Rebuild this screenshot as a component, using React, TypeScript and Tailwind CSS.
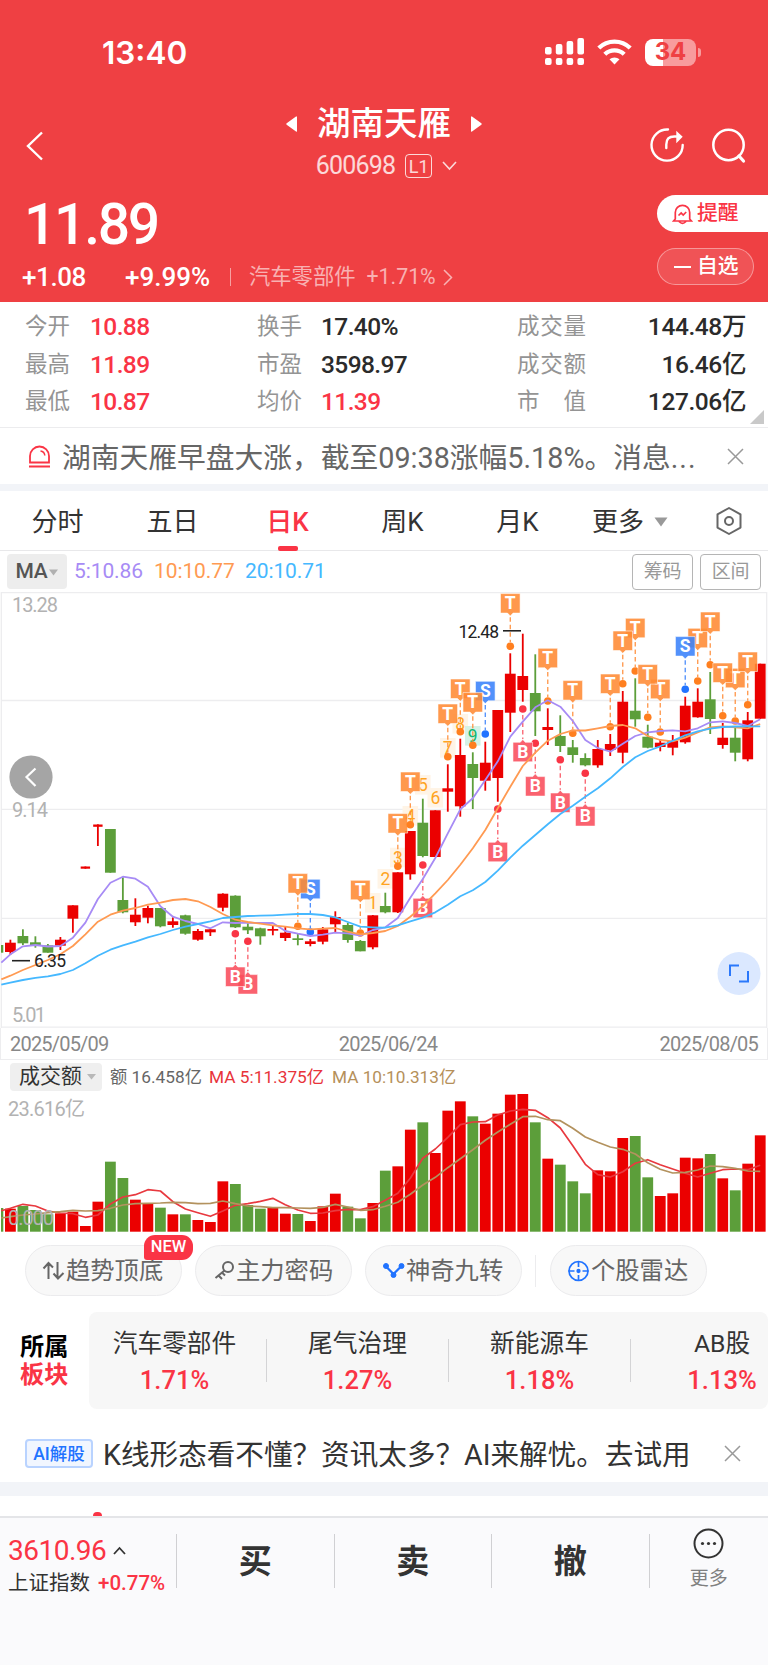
import type { ReactNode } from 'react';

type Candle = [up: boolean, high: number, top: number, bottom: number, low: number];
type MarkKind = 'T' | 'S' | 'B';

const UP = '#eb0000';
const DOWN = '#5c9e3a';

// first candle is cut off by the left edge, so it sits at index -1
const xAt = (i: number) => 10.4 + i * 12.497;

const candles: Candle[] = [
  [false, 945, 945, 952.7, 952.7],
  [true, 939.7, 942.7, 952, 955],
  [false, 929.3, 936, 943.3, 945],
  [false, 936.3, 942.3, 945.7, 947.7],
  [false, 944, 945.3, 952.7, 952.7],
  [true, 937, 939.7, 945.7, 950],
  [true, 905.3, 905.3, 918.7, 932.7],
  [true, 866.5, 866.5, 868.7, 868.7],
  [true, 824.3, 824.5, 826.8, 846],
  [false, 829, 829, 872.7, 872.7],
  [false, 877.3, 900, 912.3, 913.3],
  [true, 898.3, 914.7, 922.3, 926],
  [true, 905.7, 908, 917.7, 923.3],
  [false, 908, 908, 926.3, 927.3],
  [true, 917.3, 921.3, 925, 927.7],
  [false, 914.7, 915.3, 933.7, 934.7],
  [true, 929, 931, 939.7, 940.7],
  [true, 929, 929.3, 932.3, 936],
  [true, 893.3, 893.7, 907.7, 911.3],
  [false, 895.3, 895.7, 927.3, 928],
  [false, 923.3, 926.7, 930.3, 934],
  [false, 927.7, 928.3, 936.3, 944.7],
  [true, 926, 929, 930.7, 935.3],
  [true, 926, 932.7, 938, 941],
  [false, 933.7, 938.3, 940, 945.3],
  [true, 939, 941.3, 944, 946.3],
  [true, 927, 929.3, 941.7, 944.3],
  [true, 911.3, 917, 924.3, 932.7],
  [false, 922.7, 925, 940, 942.7],
  [false, 940, 941, 951.3, 951.3],
  [true, 915, 915.3, 947.3, 949.3],
  [false, 892.7, 906, 912.3, 913.3],
  [true, 872.3, 872.3, 912.3, 913],
  [true, 831, 831, 874.3, 879.7],
  [false, 798.7, 822.7, 856, 857.3],
  [true, 810.3, 810.3, 857, 857],
  [true, 764.3, 788.3, 791.7, 811.7],
  [true, 738.7, 755, 806.3, 816.7],
  [false, 752.3, 764, 778, 809],
  [true, 741.7, 762.7, 780.7, 790.7],
  [true, 710, 710, 778, 801.7],
  [true, 653.3, 673.7, 712.7, 732],
  [true, 633.7, 676, 690, 701.7],
  [false, 654.3, 693, 711.3, 736],
  [true, 708.3, 727, 730, 745],
  [false, 715.3, 736, 746, 752],
  [false, 740, 747.3, 755, 762.7],
  [false, 753.3, 758, 765.3, 766.3],
  [true, 740, 749, 765.3, 767.7],
  [true, 734, 744, 750, 756],
  [true, 691, 701.7, 752.7, 763.3],
  [false, 678.3, 710.7, 719.3, 726.7],
  [false, 724.7, 736.7, 747.7, 748.3],
  [true, 739.3, 742.7, 747, 751.3],
  [true, 735, 741, 747.7, 755.3],
  [true, 696.7, 705.7, 742.3, 743.7],
  [true, 688.3, 701.7, 717.3, 717.7],
  [false, 672, 699.3, 719, 734],
  [true, 723, 737.7, 745, 748.7],
  [false, 728, 737.7, 752.7, 761.3],
  [true, 712, 720.3, 759.3, 761.3],
  [true, 663.7, 663.7, 718.7, 718.7],
];

// moving averages, first value is at the left edge of the frame
const ma5 = [
  962.7, 954.3, 946.3, 945, 946.5, 946, 937.7, 922.7, 899, 882.7, 876.7, 878.7, 886.7, 906.3, 916.7, 921, 924, 928.3, 922.3, 923,
  922.7, 923, 923, 931, 933.7, 936, 934.7, 932.7, 933.3, 935.7, 930, 927.3, 918, 897.7, 879, 858, 833.3, 809.3, 798.3, 780, 761.3,
  736.7, 721.7, 707.3, 700.3, 706.7, 721, 740, 748, 751.7, 743.7, 736, 732.3, 731, 730.3, 731.3, 728.3, 722.3, 721.3, 723, 726, 719.3,
];
const ma10 = [
  979.3, 975.7, 970, 965, 960, 954.3, 946, 934.3, 921.7, 914.7, 910.7, 908, 904.7, 902.7, 900, 899, 901.3, 907, 914, 919.7, 922,
  923.7, 925.3, 926.7, 928.3, 929.3, 928.7, 928, 931.7, 934.3, 933, 931, 926, 916.7, 906, 893.3, 880, 864.7, 848.3, 830, 808.3,
  786.7, 766, 752.7, 740.7, 734, 730.3, 730.5, 728.3, 726, 725, 728.3, 736, 740, 741.3, 737.7, 732.3, 727.3, 726.3, 727.3, 728.3, 724,
];
const ma20 = [
  984.7, 982.7, 980, 977.8, 976.3, 974, 970, 963.3, 955.7, 949.7, 945.3, 941.7, 937.3, 934, 930, 926.7, 924, 921.3, 918, 917, 916,
  915.7, 915.3, 914.7, 914, 914, 915, 917.3, 922, 926.7, 927.3, 927.7, 925.3, 921.3, 917.7, 912.3, 904.7, 896.3, 890.3, 882, 870.7,
  857.7, 845.7, 835, 824.3, 814, 805.7, 796.7, 788.3, 778.3, 767, 757.3, 751, 746.3, 740.7, 735.3, 731.3, 728.7, 727, 726.5, 726.3, 726.3,
];

const marks: [MarkKind, number, number][] = [
  ['B', 19, 941.3],
  ['B', 18, 933.7],
  ['S', 24, 932],
  ['T', 23, 926.3],
  ['T', 28, 933],
  ['T', 31, 866.3],
  ['T', 32, 824.7],
  ['B', 33, 865],
  ['T', 35, 756.7],
  ['S', 38, 734],
  ['T', 36, 731.7],
  ['T', 37, 745.3],
  ['B', 39, 809],
  ['T', 40, 646.3],
  ['B', 42, 743.3],
  ['B', 41, 709],
  ['T', 43, 701],
  ['B', 44, 759.7],
  ['T', 45, 733.3],
  ['B', 46, 773.3],
  ['T', 48, 726.7],
  ['T', 50, 671],
  ['T', 49, 683.7],
  ['T', 52, 732],
  ['T', 51, 717.3],
  ['T', 55, 681],
  ['S', 54, 689.3],
  ['T', 56, 664.7],
  ['T', 58, 721],
  ['T', 57, 715.7],
  ['T', 59, 704.7],
];

// nine-turn sequence: index 29 is "1"
const turns = [903, 879, 857.7, 816, 785, 798, 748, 724, 736];

const markStyle = {
  T: { dot: '#ff7f1f', fill: '#ff8a33' },
  S: { dot: '#2173ff', fill: '#3a82fb' },
  B: { dot: '#f93545', fill: '#f94c5b' },
};

const volumes = [
  564, 566, 558, 570, 583, 580, 575, 618, 545, 425, 474, 539, 550, 563, 583, 583, 600, 606, 484, 492, 555, 566, 562, 581, 582, 603,
  559, 521, 560, 595, 549, 452, 439, 329, 307, 399, 272, 244, 289, 311, 281, 224, 222, 307, 416, 434, 484, 520, 451, 454, 354, 348,
  472, 528, 520, 413, 415, 402, 475, 511, 431, 346,
];
const volMa5 = [
  572, 565, 553, 558, 573, 579, 581, 592, 585, 552, 531, 524, 509, 513, 545, 567, 578, 589, 573, 556, 551, 544, 535, 554, 570, 580,
  579, 572, 568, 569, 560, 541, 520, 475, 415, 387, 352, 314, 306, 305, 285, 273, 268, 271, 293, 324, 377, 433, 464, 471, 455, 430,
  419, 434, 447, 460, 471, 460, 449, 447, 449, 436,
];
const volMa10 = [
  594, 590, 585, 582, 578, 575, 571, 573, 572, 565, 555, 551, 550, 549, 547, 548, 551, 550, 543, 551, 558, 560, 563, 563, 564, 565,
  562, 553, 561, 571, 569, 559, 547, 523, 495, 472, 443, 416, 389, 361, 336, 313, 290, 289, 299, 302, 325, 351, 367, 381, 388, 402,
  428, 448, 459, 457, 450, 438, 440, 445, 453, 454,
];

const linePoints = (values: number[], toY: (v: number) => number = (v) => v) =>
  values.map((v, i) => `${(i === 0 ? 1.3 : xAt(i - 1)).toFixed(1)},${toY(v).toFixed(1)}`).join(' ');

const volY = (v: number) => 1020 + v / 3;

function Mark({ kind, i, y }: { kind: MarkKind; i: number; y: number }) {
  const x = xAt(i);
  const { dot, fill } = markStyle[kind];
  const below = kind === 'B';
  const top = below ? y + 33.3 : y - 52.7;
  const box = below
    ? `M${x - 9.8} ${top}h7.3l2.5-2.8 2.5 2.8h7.3v19.5h-19.6z`
    : `M${x - 9.8} ${top}h19.6v19.5h-7l-2.8 2.8-2.8-2.8h-7z`;
  return (
    <g>
      <line x1={x} x2={x} y1={below ? y + 6 : y - 29} y2={below ? y + 30 : y - 4} stroke={fill} strokeOpacity="0.9" strokeWidth="1.3" strokeDasharray="4.5 3" />
      <circle cx={x} cy={y} r="3.8" fill={dot} />
      <path d={box} fill={fill} fillOpacity="0.88" stroke="#fff" strokeOpacity="0.7" strokeWidth="0.8" />
      <text x={x} y={top + 15.6} textAnchor="middle" fontSize="17.5" fontWeight="700" fill="#fff">
        {kind}
      </text>
    </g>
  );
}

function PriceChart() {
  return (
    <svg className="block h-[436px] w-full" viewBox="0 592 768 436">
      <g stroke="#ededef" strokeWidth="1.3">
        {[592.7, 700.5, 809.3, 918.3, 1027.2].map((y) => (
          <line key={y} x1="1" x2="767" y1={y} y2={y} />
        ))}
        <line x1="1.3" x2="1.3" y1="592" y2="1028" />
        <line x1="766.7" x2="766.7" y1="592" y2="1028" />
      </g>
      <g fontSize="20" fill="#b2b2b2">
        <text x="12" y="612" textLength="46">13.28</text>
        <text x="12" y="817" textLength="36">9.14</text>
        <text x="12" y="1022" textLength="34">5.01</text>
      </g>
      {turns.map((y, n) => {
        const x = xAt(29 + n);
        const last = n === 8;
        return (
          <g key={n}>
            <rect x={x - 7.8} y={y - 10} width="15.6" height="19.6" fill={last ? '#d5f2e6' : '#fff4e6'} />
            <text x={x} y={y + 6} textAnchor="middle" fontSize="17.5" fill={last ? '#12b56f' : '#ffa41f'}>
              {n + 1}
            </text>
          </g>
        );
      })}
      {candles.map(([up, high, top, bottom, low], n) => {
        const x = xAt(n - 1);
        const color = up ? UP : DOWN;
        const half = n === 7 || n === 8 ? 4.7 : 5.4;
        const left = Math.max(x - half, 1);
        return (
          <g key={n} fill={color}>
            {n > 0 && <rect x={x - 0.9} y={high} width="1.8" height={low - high} />}
            <rect x={left} y={top} width={x + half - left} height={bottom - top} />
          </g>
        );
      })}
      {marks.map(([kind, i, y]) => (
        <Mark key={`${kind}${i}`} kind={kind} i={i} y={y} />
      ))}
      <g fill="none" strokeWidth="1.8" strokeLinejoin="round">
        <polyline points={linePoints(ma5)} stroke="#a78bf5" />
        <polyline points={linePoints(ma10)} stroke="#ff9a52" />
        <polyline points={linePoints(ma20)} stroke="#45b8ff" />
      </g>
      <g fontSize="17.5" fill="#222">
        <line x1="12" x2="30" y1="960.7" y2="960.7" stroke="#222" strokeWidth="1.6" />
        <text x="34" y="967.3" textLength="32">6.35</text>
        <line x1="503" x2="521" y1="630.8" y2="630.8" stroke="#222" strokeWidth="1.6" />
        <text x="458.5" y="637.5" textLength="40.5">12.48</text>
      </g>
      <circle cx="31" cy="777" r="21.6" fill="#a5a5a5" />
      <path d="M35.5 768.5 26.5 777l9 9" fill="none" stroke="#fff" strokeWidth="2.2" />
      <circle cx="739" cy="973.5" r="21.5" fill="#dbe8ff" />
      <path d="M730 976v-10.500h9M748 971v10.500h-9" fill="none" stroke="#2b78fb" strokeWidth="2" />
    </svg>
  );
}

function VolumeChart() {
  return (
    <svg className="block h-[140px] w-full" viewBox="0 1092 768 140">
      {volumes.map((v, n) => {
        const x = xAt(n - 1);
        const left = Math.max(x - 5.4, 1);
        return <rect key={n} x={left} y={volY(v)} width={x + 5.4 - left} height={1231.7 - volY(v)} fill={candles[n][0] ? UP : DOWN} />;
      })}
      <g fill="none" strokeWidth="1.7" strokeLinejoin="round">
        <polyline points={linePoints(volMa5, volY)} stroke="#e8393f" />
        <polyline points={linePoints(volMa10, volY)} stroke="#b3925e" />
      </g>
      <g fontSize="20" fill="#b2b2b2">
        <text x="8" y="1115.5" textLength="77">23.616亿</text>
        <text x="8" y="1225" textLength="46">0.000</text>
      </g>
    </svg>
  );
}

function StatusBar() {
  return (
    <div className="flex h-[104px] items-center pl-[102px] pr-[67px]">
      <span className="pt-[2px] font-['Inter',sans-serif] text-[31.5px] font-semibold">13:40</span>
      <svg className="ml-auto" width="39" height="28" viewBox="0 0 39 28" fill="#fff">
        {[9, 6, 3, 0].map((y, n) => (
          <g key={y}>
            <rect x={n * 10.8} y={y} width="6.600" height={16.5 - y} rx="2" />
            <rect x={n * 10.8} y="20" width="6.600" height="7" rx="2" />
          </g>
        ))}
      </svg>
      <svg className="ml-[13px]" width="35" height="26" viewBox="0 0 35 26">
        <g fill="none" stroke="#fff" strokeWidth="4.300">
          <path d="M1.800 9a22.500 22.500 0 0 1 31.400 0" />
          <path d="M7.800 15.200a14 14 0 0 1 19.400 0" />
        </g>
        <path d="M12.500 20.300a7.500 7.500 0 0 1 10 0l-5 5.300z" fill="#fff" />
      </svg>
      <div className="ml-[13px] flex h-[27px] w-[51px] items-center justify-center rounded-[8px] bg-[linear-gradient(90deg,#fff_35%,#f89c9d_35%)]">
        <span className="font-['Inter',sans-serif] text-[24px] font-bold text-[#ef4043]">34</span>
      </div>
      <span className="ml-0.5 h-[9px] w-[3px] rounded-r-full bg-[#f89c9d]" />
    </div>
  );
}

function TitleBar() {
  return (
    <div className="flex h-[91px] justify-between pl-[26px] pr-[21px]">
      <svg className="mt-[27px]" width="18" height="30" viewBox="0 0 18 30" fill="none" stroke="#fff" strokeWidth="2.400">
        <path d="M16 1.500 2 15l14 13.500" />
      </svg>
      <div className="ml-[75px] flex flex-col items-center">
        <div className="flex h-[40px] items-center gap-[19px]">
          <svg width="12" height="16" viewBox="0 0 12 16" fill="#fff"><path d="M11 .5v15a1 1 0 0 1-1 0L1 9a1.200 1.200 0 0 1 0-2l9-6.500z" /></svg>
          <h1 className="text-[33.5px] font-medium leading-none">湖南天雁</h1>
          <svg width="12" height="16" viewBox="0 0 12 16" fill="#fff"><path d="M1 .5v15a1 1 0 0 0 1 0L11 9a1.200 1.200 0 0 0 0-2L2 .5z" /></svg>
        </div>
        <div className="ml-[5px] mt-[5px] flex h-[34px] items-center text-white/80">
          <span className="text-[25px] tracking-[-0.8px]">600698</span>
          <span className="ml-[10px] flex h-[24px] w-[27px] items-center justify-center rounded-[4px] border border-white/80 text-[18px]">L1</span>
          <svg className="ml-[10px]" width="15" height="10" viewBox="0 0 15 10" fill="none" stroke="#fff" strokeOpacity=".8" strokeWidth="1.600"><path d="m1 1 6.500 7L14 1" /></svg>
        </div>
      </div>
      <div className="mt-[22px] flex gap-[26px]">
        <svg width="36" height="38" viewBox="0 0 36 38" fill="none" stroke="#fff" strokeWidth="2.400" strokeLinecap="round">
          <path d="M19 3.500A15.600 15.600 0 1 0 33.700 19" />
          <path d="M17.300 22v-3.500q0-8 8-8h5" />
          <path d="M28.500 7.500 32 10.800l-3.500 3.600z" fill="#fff" />
        </svg>
        <svg width="36" height="38" viewBox="0 0 36 38" fill="none" stroke="#fff" strokeWidth="2.500" strokeLinecap="round">
          <circle cx="17.500" cy="19" r="15.200" />
          <path d="m28 30 4.500 5" strokeWidth="3.200" />
        </svg>
      </div>
    </div>
  );
}

function PriceHeader() {
  return (
    <div className="flex h-[107px] justify-between">
      <div className="flex flex-col pl-[22px]">
        <div className="h-[58px] pl-[2px] pt-px text-[57px] font-medium leading-[58px] tracking-[-2.3px]">11.89</div>
        <div className="mt-[8px] flex h-[32px] items-center">
          <span className="w-[103px] text-[26px] font-medium tracking-[-0.4px]">+1.08</span>
          <span className="w-[105px] text-[26px] font-medium">+9.99%</span>
          <span className="h-[18px] w-px bg-white/50" />
          <span className="ml-[18px] text-[21.3px] text-white/60">汽车零部件</span>
          <span className="ml-[11px] text-[21.3px] text-white/60">+1.71%</span>
          <svg className="ml-[7px]" width="10" height="17" viewBox="0 0 10 17" fill="none" stroke="#fff" strokeOpacity=".6" strokeWidth="1.500"><path d="m1 1 7.500 7.500L1 16" /></svg>
        </div>
      </div>
      <div className="flex w-[111px] flex-col gap-[16px]">
        <div className="flex h-[37px] items-center rounded-l-full bg-white pl-[15px] text-[20.8px] font-medium text-[#fa3445]">
          <svg width="21" height="22" viewBox="0 0 21 22" fill="none" stroke="currentColor" strokeWidth="1.700">
            <path d="M3.300 16V9.500a7.200 7.200 0 0 1 14.400 0V16l1.800 2h-18zM7 18.500q3.500 3.500 7 0" />
            <path d="m6.500 12.500 2.700-2.500 2 2 3-3" />
          </svg>
          <span className="ml-[4px] pt-px">提醒</span>
        </div>
        <div className="flex h-[37px] w-[97px] items-center rounded-full border border-white/40 bg-white/10 pl-[16px] text-[20.8px] font-medium">
          <span className="h-[2px] w-[17px] bg-white" />
          <span className="ml-[6px] pt-px">自选</span>
        </div>
      </div>
    </div>
  );
}

const stats = [
  ['今开', '10.88', '换手', '17.40%', '成交量', '144.48万'],
  ['最高', '11.89', '市盈', '3598.97', '成交额', '16.46亿'],
  ['最低', '10.87', '均价', '11.39', '市值', '127.06亿'],
];

function Stats() {
  return (
    <div className="relative h-[126px] border-b border-[#ececee] pl-[25px] pr-[22px] pt-[7px] text-[24.5px] tracking-[-0.6px]">
      {stats.map(([a, av, b, bv, c, cv], row) => (
        <div key={a} className="flex h-[37.5px] items-center">
          <span className="w-[65px] pb-px text-[22.5px] tracking-normal text-[#949494]">{a}</span>
          <span className="w-[167px] font-medium text-[#fa3445]">{av}</span>
          <span className="w-[64px] pb-px text-[22.5px] tracking-normal text-[#949494]">{b}</span>
          <span className={`w-[196px] font-medium ${row === 2 ? 'text-[#fa3445]' : 'text-[#2b2b2b]'}`}>{bv}</span>
          <span className="flex w-[69px] justify-between pb-px text-[22.5px] tracking-normal text-[#949494]">
            {c.split('').map((ch) => (
              <span key={ch}>{ch}</span>
            ))}
          </span>
          <span className="ml-auto font-medium tracking-[-0.4px] text-[#2b2b2b]">{cv}</span>
        </div>
      ))}
      <svg className="absolute bottom-[3px] right-[4px]" width="14" height="14" viewBox="0 0 14 14" fill="#c9c9c9"><path d="M14 0v14H0z" /></svg>
    </div>
  );
}

function CloseIcon() {
  return (
    <svg width="17" height="17" viewBox="0 0 17 17" fill="none" stroke="#999" strokeWidth="1.500"><path d="m1 1 15 15M16 1 1 16" /></svg>
  );
}

function Notice() {
  return (
    <div className="flex h-[56px] items-center pl-[28px] pr-[24px]">
      <svg width="23" height="23" viewBox="0 0 23 23" fill="none" stroke="#fa3445" strokeWidth="1.800">
        <path d="M2 17.500V11a9.500 9.500 0 0 1 19 0v6.500zM1 21.500h21" />
        <path d="M12.500 6q4 .5 4.300 4.500" strokeWidth="1.500" />
      </svg>
      <span className="ml-[11px] whitespace-nowrap pt-[4px] text-[28.75px] leading-none text-[#666]">
        湖南天雁早盘大涨，截至09:38涨幅5.18%。消息<span className="tracking-[1px]">...</span>
      </span>
      <span className="ml-auto"><CloseIcon /></span>
    </div>
  );
}

function Tabs() {
  const tabs = ['分时', '五日', '日K', '周K', '月K'];
  return (
    <div className="flex h-[60px] items-center border-b border-[#e8e8ea] text-[26px] text-[#333]">
      {tabs.map((tab) => (
        <div
          key={tab}
          className={`relative flex h-full w-[115px] items-center justify-center pt-[4px] ${tab === '日K' ? 'font-medium text-[#fa3445]' : ''}`}
        >
          {tab}
          {tab === '日K' && <span className="absolute -bottom-px left-[47.5px] h-[5px] w-[20px] rounded-[2px] bg-[#fa3445]" />}
        </div>
      ))}
      <div className="ml-[17px] flex items-center pt-[4px]">
        更多
        <svg className="-mt-[2px] ml-[10px]" width="14" height="10" viewBox="0 0 14 10" fill="#999"><path d="M.5.500h13L7 9.500z" /></svg>
      </div>
      <svg className="ml-auto mr-[25px]" width="28" height="28" viewBox="0 0 28 28" fill="none" stroke="#666" strokeWidth="2">
        <path d="M14 1 25.500 7.400v13.200L14 27 2.500 20.600V7.400z" strokeLinejoin="round" />
        <circle cx="14" cy="14" r="4" />
      </svg>
    </div>
  );
}

function MaRow() {
  return (
    <div className="flex h-[41px] items-center pl-[7px] pr-[7px] text-[21px] tracking-[-0.3px]">
      <div className="flex h-[35px] w-[60px] items-center justify-center rounded-[4px] bg-[#ededed] pt-px font-medium text-[#555]">
        MA
        <svg className="ml-[2px]" width="9" height="7" viewBox="0 0 9 7" fill="#b0b0b0"><path d="M0 .5h9L4.500 6.500z" /></svg>
      </div>
      <span className="ml-[7px] w-[80px] pt-px tracking-[-0.1px] text-[#a78bf5]">5:10.86</span>
      <span className="w-[91px] pt-px tracking-[-0.1px] text-[#ff9a52]">10:10.77</span>
      <span className="pt-px tracking-[-0.1px] text-[#45b8ff]">20:10.71</span>
      <div className="ml-auto flex gap-[7px] text-[19px] text-[#999]">
        <span className="flex h-[36px] w-[61px] items-center justify-center rounded-[4px] border border-[#b5b5b5] pt-[2px]">筹码</span>
        <span className="flex h-[36px] w-[61px] items-center justify-center rounded-[4px] border border-[#b5b5b5] pt-[2px]">区间</span>
      </div>
    </div>
  );
}

function VolumeHeader() {
  return (
    <div className="flex h-[33px] items-center border-t border-[#ededef] pl-[10px] pt-[2px] text-[17.5px]">
      <div className="flex h-[28px] w-[92px] items-center rounded-[4px] bg-[#efefef] pl-[9px] text-[21px] text-[#333]">
        成交额
        <svg className="ml-[5px]" width="9" height="6" viewBox="0 0 9 6" fill="#b8b8b8"><path d="M0 0h9L4.500 5.500z" /></svg>
      </div>
      <span className="ml-[8px] w-[99px] whitespace-nowrap pt-[2px] text-[17.3px] text-[#666]">额 16.458亿</span>
      <span className="w-[123px] whitespace-nowrap pt-[2px] text-[17.3px] text-[#e8333a]">MA 5:11.375亿</span>
      <span className="whitespace-nowrap pt-[2px] text-[17.2px] text-[#b5905a]">MA 10:10.313亿</span>
    </div>
  );
}

function Chip({ icon, children, badge }: { icon: ReactNode; children: ReactNode; badge?: string }) {
  return (
    <div className="relative flex h-[51px] w-[157px] items-center rounded-full border border-[#ebebed] bg-[#f8f8f8] pl-[16px] text-[24.3px] text-[#666]">
      {icon}
      <span className="ml-[1px] whitespace-nowrap pt-px">{children}</span>
      {badge && (
        <span className="absolute -right-[12px] -top-[11px] flex h-[25px] w-[49px] items-center justify-center rounded-[11px] rounded-bl-[3px] bg-[#fa3445] text-[16.5px] font-medium text-white">
          {badge}
        </span>
      )}
    </div>
  );
}

function Chips() {
  return (
    <div className="flex h-[80px] items-center gap-[13px] pb-[3px] pl-[25px]">
      <Chip
        badge="NEW"
        icon={
          <svg width="23" height="20" viewBox="0 0 23 20" fill="none" stroke="#666" strokeWidth="2">
            <path d="M6.500 18V2M1.500 7.500l5-5.500L11 6.500M15.500 1v16.500M11.500 12.500l4.500 5 5.500-5.500" />
          </svg>
        }
      >
        趋势顶底
      </Chip>
      <Chip
        icon={
          <svg className="ml-[2px]" width="21" height="21" viewBox="0 0 21 21" fill="none" stroke="#666" strokeWidth="2">
            <circle cx="14" cy="7" r="5" />
            <path d="M10.500 10.500 1.500 18M4.500 15.500l3.500 3.500M8 12.500l3 3" />
          </svg>
        }
      >
        主力密码
      </Chip>
      <Chip
        icon={
          <svg width="23" height="20" viewBox="0 0 23 20" fill="#2173ff" stroke="#2173ff">
            <path d="M4 5.500 11.500 13 19 5.500" fill="none" strokeWidth="2.200" />
            <circle cx="4" cy="5" r="2.500" />
            <circle cx="11.500" cy="14" r="2.500" />
            <circle cx="19.500" cy="5" r="2.500" />
          </svg>
        }
      >
        神奇九转
      </Chip>
      <span className="mr-[1px] h-[32px] w-px bg-[#ececee]" />
      <Chip
        icon={
          <svg width="23" height="22" viewBox="0 0 23 22" fill="none" stroke="#2173ff" strokeWidth="1.700">
            <circle cx="11.500" cy="11" r="9.500" />
            <path d="M11.500 1v6M11.500 15v6M1.500 11h6M15.500 11h6" />
            <circle cx="11.500" cy="11" r="1.300" fill="#2173ff" />
          </svg>
        }
      >
        个股雷达
      </Chip>
    </div>
  );
}

const sectors = [
  { name: '汽车零部件', pct: '1.71%' },
  { name: '尾气治理', pct: '1.27%' },
  { name: '新能源车', pct: '1.18%' },
  { name: 'AB股', pct: '1.13%' },
];

function Sectors() {
  return (
    <div className="flex h-[97px] overflow-hidden">
      <div className="flex w-[89px] shrink-0 flex-col justify-center pl-[20px] pt-[1px] text-[24.2px] font-bold leading-[28px]">
        <span className="text-black">所属</span>
        <span className="text-[#fa3445]">板块</span>
      </div>
      <div className="w-[679px] shrink-0 overflow-hidden rounded-[8px] bg-[#f7f7f7]">
        <div className="flex h-full w-[725px] items-center">
          {sectors.map((s, i) => (
            <div
              key={s.name}
              className={`flex shrink-0 items-center justify-center ${i === 0 ? 'w-[178px] pr-[6px]' : 'w-[182px]'} ${i < 3 ? 'h-[43px] border-r border-[#d4d4d6]' : ''}`}
            >
              <div className="flex flex-col items-center pt-[3px]">
                <span className="h-[37px] text-[24.7px] leading-[37px] text-[#333]">{s.name}</span>
                <span className="h-[37px] text-[25.5px] font-medium leading-[37px] text-[#fa3445]">{s.pct}</span>
              </div>
            </div>
          ))}
        </div>
      </div>
    </div>
  );
}

function AiRow() {
  return (
    <div className="flex h-[73px] items-center pl-[25px] pr-[27px] pt-[16px]">
      <span className="flex h-[29px] w-[68px] items-center justify-center rounded-[4px] border-2 border-[#b9d3ff] bg-[#f1f6ff] pt-px text-[17.5px] font-medium text-[#2173ff]">
        AI解股
      </span>
      <span className="ml-[10px] whitespace-nowrap pt-[3px] text-[28.6px] leading-none text-[#333]">K线形态看不懂？资讯太多？AI来解忧。去试用</span>
      <span className="ml-auto"><CloseIcon /></span>
    </div>
  );
}

function BottomBar() {
  return (
    <div className="flex h-[149px] items-start border-t-2 border-[#e4e5e8] bg-[#fafafc] pt-[16px]">
      <div className="flex h-[54px] w-[177px] flex-col border-r border-[#d0d0d3] pl-[8px]">
        <div className="flex h-[33px] shrink-0 items-center">
          <span className="text-[28px] tracking-[-0.5px] text-[#fa3445]">3610.96</span>
          <svg className="ml-[7px]" width="13" height="9" viewBox="0 0 13 9" fill="none" stroke="#333" strokeWidth="1.800"><path d="m1 8 5.500-6L12 8" /></svg>
        </div>
        <div className="flex h-[32px] shrink-0 items-center whitespace-nowrap text-[20.5px]">
          <span className="text-[#333]">上证指数</span>
          <span className="ml-[8px] font-medium text-[#fa3445]">+0.77%</span>
        </div>
      </div>
      {['买', '卖', '撤'].map((label) => (
        <div key={label} className="flex h-[54px] w-[157.5px] items-center justify-center border-r border-[#d0d0d3] pt-[2px] text-[33px] font-bold text-[#333]">
          {label}
        </div>
      ))}
      <div className="-mt-[6px] flex flex-1 flex-col items-center">
        <svg width="31" height="31" viewBox="0 0 31 31" fill="none" stroke="#333" strokeWidth="2">
          <circle cx="15.500" cy="15.500" r="14" />
          <g fill="#333" stroke="none">
            <circle cx="9.500" cy="15.500" r="1.600" />
            <circle cx="15.500" cy="15.500" r="1.600" />
            <circle cx="21.500" cy="15.500" r="1.600" />
          </g>
        </svg>
        <span className="mt-[6px] text-[19px] leading-[28px] text-[#808080]">更多</span>
      </div>
    </div>
  );
}

export default function App() {
  return (
    <div className="h-[1665px] w-[768px] overflow-hidden bg-white font-['Roboto','Noto_Sans_CJK_SC',sans-serif]">
      <header className="h-[302px] bg-[#ef4043] text-white">
        <StatusBar />
        <TitleBar />
        <PriceHeader />
      </header>
      <Stats />
      <Notice />
      <div className="h-[7px] bg-[#f2f4f8]" />
      <Tabs />
      <MaRow />
      <PriceChart />
      <div className="flex h-[31px] items-center justify-between border-x border-[#ededef] px-[9px] text-[20px] tracking-[-0.8px] text-[#888]">
        <span>2025/05/09</span>
        <span className="ml-[8px]">2025/06/24</span>
        <span>2025/08/05</span>
      </div>
      <VolumeHeader />
      <VolumeChart />
      <Chips />
      <Sectors />
      <AiRow />
      <div className="h-[14px] bg-[#f2f4f8]" />
      <div className="flex h-[20px] items-end pl-[93px]">
        <span className="h-[4.5px] w-[9px] rounded-t-full bg-[#fa3445]" />
      </div>
      <BottomBar />
    </div>
  );
}
